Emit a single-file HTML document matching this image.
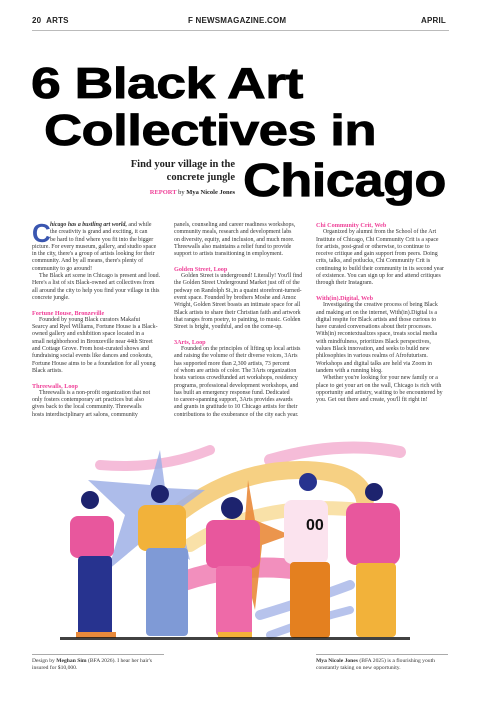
<!DOCTYPE html>
<html><head><meta charset="utf-8"><style>
*{margin:0;padding:0;box-sizing:border-box}
body{width:480px;height:720px;background:#fff;position:relative;overflow:hidden;font-family:"Liberation Serif",serif;color:#222}
.hdr{position:absolute;top:16px;font:bold 8px "Liberation Sans",sans-serif;color:#222;letter-spacing:.2px}
.rule{position:absolute;left:32px;width:417px;top:30px;height:1px;background:#bbb}
.t{position:absolute;font-family:"Liberation Sans",sans-serif;font-weight:900;color:#000;letter-spacing:-0.5px;white-space:nowrap;line-height:1;transform-origin:0 0;-webkit-text-stroke:0.8px #000}
.sub{position:absolute;right:245px;text-align:right;font-weight:bold;font-size:10.5px;line-height:13px;white-space:nowrap}
.col{position:absolute;top:222px;width:134px;font-size:5.9px;line-height:7.3px;white-space:nowrap;color:#333}
.col div{height:7.3px}
.h{color:#ef3f97;font-weight:bold;font-size:6.2px}
.i{padding-left:7px}
.cap{position:absolute;font-size:5.6px;line-height:7.3px;color:#333;border-top:1px solid #aaa;padding-top:3px;width:132px;top:654px;white-space:nowrap}
</style></head><body>
<div class="hdr" style="left:32px">20&nbsp;&nbsp;ARTS</div>
<div class="hdr" style="left:188px">F NEWSMAGAZINE.COM</div>
<div class="hdr" style="left:421px">APRIL</div>
<div class="rule"></div>

<div class="t" style="left:31px;top:62px;font-size:44px;transform:scaleX(1.22)">6 Black Art</div>
<div class="t" style="left:44px;top:109px;font-size:44px;transform:scaleX(1.2)">Collectives in</div>
<div class="t" style="left:243px;top:157px;font-size:46px;transform:scaleX(1.14)">Chicago</div>
<div class="sub" style="top:158px">Find your village in the<br>concrete jungle</div>
<div class="sub" style="top:186px;font-size:6.5px"><span style="color:#ef3f97">REPORT</span> <span style="font-weight:normal">by</span> Mya Nicole Jones</div>

<div class="col" style="left:32px">
<div style="position:absolute;left:0;top:0;font:bold 26px 'Liberation Sans',sans-serif;color:#3a56b0;line-height:22px;height:22px">C</div>
<div style="padding-left:18px"><b><i>hicago has a bustling art world,</i></b> and while</div>
<div style="padding-left:18px">the creativity is grand and exciting, it can</div>
<div style="padding-left:18px">be hard to find where you fit into the bigger</div>
<div>picture. For every museum, gallery, and studio space</div>
<div>in the city, there's a group of artists looking for their</div>
<div>community. And by all means, there's plenty of</div>
<div>community to go around!</div>
<div class="i">The Black art scene in Chicago is present and loud.</div>
<div>Here's a list of six Black-owned art collectives from</div>
<div>all around the city to help you find your village in this</div>
<div>concrete jungle.</div>
<div></div>
<div class="h">Fortune House, Bronzeville</div>
<div class="i">Founded by young Black curators Makafui</div>
<div>Searcy and Ryel Williams, Fortune House is a Black-</div>
<div>owned gallery and exhibition space located in a</div>
<div>small neighborhood in Bronzeville near 44th Street</div>
<div>and Cottage Grove. From host-curated shows and</div>
<div>fundraising social events like dances and cookouts,</div>
<div>Fortune House aims to be a foundation for all young</div>
<div>Black artists.</div>
<div></div>
<div class="h">Threewalls, Loop</div>
<div class="i">Threewalls is a non-profit organization that not</div>
<div>only fosters contemporary art practices but also</div>
<div>gives back to the local community. Threewalls</div>
<div>hosts interdisciplinary art salons, community</div>
</div>

<div class="col" style="left:174px">
<div>panels, counseling and career readiness workshops,</div>
<div>community meals, research and development labs</div>
<div>on diversity, equity, and inclusion, and much more.</div>
<div>Threewalls also maintains a relief fund to provide</div>
<div>support to artists transitioning in employment.</div>
<div></div>
<div class="h">Golden Street, Loop</div>
<div class="i">Golden Street is underground! Literally! You'll find</div>
<div>the Golden Street Underground Market just off of the</div>
<div>pedway on Randolph St.,in a quaint storefront-turned-</div>
<div>event space. Founded by brothers Moshe and Amoz</div>
<div>Wright, Golden Street boasts an intimate space for all</div>
<div>Black artists to share their Christian faith and artwork</div>
<div>that ranges from poetry, to painting, to music. Golden</div>
<div>Street is bright, youthful, and on the come-up.</div>
<div></div>
<div class="h">3Arts, Loop</div>
<div class="i">Founded on the principles of lifting up local artists</div>
<div>and raising the volume of their diverse voices, 3Arts</div>
<div>has supported more than 2,300 artists, 73 percent</div>
<div>of whom are artists of color. The 3Arts organization</div>
<div>hosts various crowdfunded art workshops, residency</div>
<div>programs, professional development workshops, and</div>
<div>has built an emergency response fund. Dedicated</div>
<div>to career-spanning support, 3Arts provides awards</div>
<div>and grants in gratitude to 10 Chicago artists for their</div>
<div>contributions to the exuberance of the city each year.</div>
</div>

<div class="col" style="left:316px">
<div class="h">Chi Community Crit, Web</div>
<div class="i">Organized by alumni from the School of the Art</div>
<div>Institute of Chicago, Chi Community Crit is a space</div>
<div>for artists, post-grad or otherwise,  to continue to</div>
<div>receive critique and gain support from peers. Doing</div>
<div>crits, talks, and potlucks, Chi Community Crit is</div>
<div>continuing to build their community in its second year</div>
<div>of existence. You can sign up for and attend critiques</div>
<div>through their Instagram.</div>
<div></div>
<div class="h">With(in).Digital, Web</div>
<div class="i">Investigating the creative process of being Black</div>
<div>and making art on the internet, With(in).Digital is a</div>
<div>digital respite for Black artists and those curious to</div>
<div>have curated conversations about their processes.</div>
<div>With(in) recontextualizes space, treats social media</div>
<div>with mindfulness, prioritizes Black perspectives,</div>
<div>values Black innovation, and seeks to build new</div>
<div>philosophies in various realms of Afrofuturism.</div>
<div>Workshops and digital talks are held via Zoom in</div>
<div>tandem with a running blog.</div>
<div class="i">Whether you're looking for your new family or a</div>
<div>place to get your art on the wall, Chicago is rich with</div>
<div>opportunity and artistry, waiting to be encountered by</div>
<div>you. Get out there and create, you'll fit right in!</div>
</div>

<svg style="position:absolute;left:0;top:440px" width="480" height="210" viewBox="0 440 480 210">
<g fill="none" stroke-linecap="round" opacity=".75">
<path d="M100 465 Q160 470 210 450" stroke="#f2a6cc" stroke-width="10"/>
<path d="M270 460 Q340 440 400 452" stroke="#f2a6cc" stroke-width="12"/>
<path d="M170 520 Q230 470 300 470 Q360 470 365 500" stroke="#f3c15a" stroke-width="18"/>
<path d="M190 545 Q260 500 360 510" stroke="#f7d88c" stroke-width="14"/>
<path d="M160 590 Q230 560 300 570" stroke="#ee6aa8" stroke-width="20"/>
<path d="M260 615 Q310 600 350 585" stroke="#9fb0e6" stroke-width="10"/>
<path d="M270 635 Q310 620 350 610" stroke="#9fb0e6" stroke-width="8"/>
</g>
<polygon points="160,450 150,485 88,480 125,515 108,570 150,535 190,560 178,510 205,490 165,488" fill="#9fb0e6" opacity=".85"/>
<polygon points="248,480 255,520 290,535 262,545 255,610 240,550 215,540 245,520" fill="#e98a3a" opacity=".9"/>
<circle cx="90" cy="500" r="9" fill="#1d236e"/>
<rect x="70" y="516" width="44" height="42" rx="8" fill="#e8579d"/>
<rect x="78" y="556" width="34" height="80" rx="4" fill="#27338f"/>
<rect x="76" y="632" width="40" height="6" fill="#e98a3a"/>
<circle cx="160" cy="494" r="9" fill="#1d236e"/>
<rect x="138" y="505" width="48" height="46" rx="8" fill="#f2b23a"/>
<rect x="146" y="548" width="42" height="88" rx="4" fill="#7f9ad6"/>
<circle cx="232" cy="508" r="11" fill="#1d236e"/>
<rect x="206" y="520" width="54" height="48" rx="8" fill="#e8579d"/>
<rect x="216" y="566" width="36" height="70" rx="4" fill="#ee6aa8"/>
<rect x="218" y="632" width="34" height="6" fill="#f2b23a"/>
<circle cx="308" cy="482" r="9" fill="#27338f"/>
<rect x="284" y="500" width="44" height="64" rx="8" fill="#fbe3ee"/>
<text x="306" y="530" font-family="Liberation Sans,sans-serif" font-size="16" font-weight="bold" fill="#111">00</text>
<rect x="290" y="562" width="40" height="76" rx="4" fill="#e4801f"/>
<circle cx="374" cy="492" r="9" fill="#1d236e"/>
<rect x="346" y="503" width="54" height="62" rx="10" fill="#e8579d"/>
<rect x="356" y="563" width="40" height="74" rx="4" fill="#f2b23a"/>
<rect x="60" y="637" width="350" height="3" fill="#111" opacity=".8"/>
</svg>

<div class="cap" style="left:32px">Design by <b>Meghan Sim</b> (BFA 2026). I hear her hair's<br>insured for $10,000.</div>
<div class="cap" style="left:316px">
<b>Mya Nicole Jones</b> (BFA 2025) is a flourishing youth<br>constantly taking on new opportunity.</div>
</body></html>
